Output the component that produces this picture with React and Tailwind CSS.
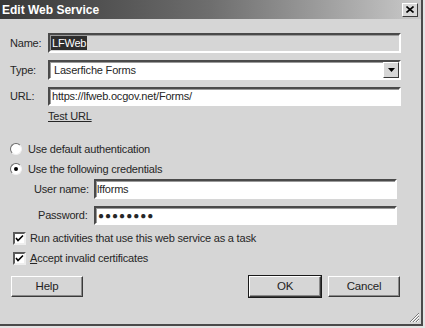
const font = { fontFamily: '"Liberation Sans", Arial, sans-serif' };

function Sunken({ className = '', children }) {
  return (
    <div className={`border-2 border-t-[#4a4a4a] border-l-[#4a4a4a] border-b-white border-r-white shadow-[inset_1px_1px_0_#9a9a9a] ${className}`}>
      {children}
    </div>
  );
}

function Button({ children, isDefault }) {
  return (
    <div className={isDefault ? 'border border-[#1a1a1a]' : 'border border-transparent'}>
      <div className="h-[21px] w-[72px] flex items-center justify-center border border-t-white border-l-white border-b-[#3a3a3a] border-r-[#3a3a3a] shadow-[inset_-1px_-1px_0_#8a8a8a] bg-[#d6d6d6] text-[11.5px] text-[#1e1e1e]">
        {children}
      </div>
    </div>
  );
}

function Radio({ checked, label }) {
  return (
    <div className="flex items-center h-[14px] gap-[6px]">
      <div className="w-[12px] h-[12px] rounded-full bg-white border border-t-[#6a6a6a] border-l-[#6a6a6a] border-b-[#f0f0f0] border-r-[#f0f0f0] flex items-center justify-center">
        {checked && <div className="w-[4px] h-[4px] rounded-full bg-black" />}
      </div>
      <span>{label}</span>
    </div>
  );
}

function Check({ label, accel }) {
  return (
    <div className="flex items-center h-[14px] gap-[4px]">
      <div className="w-[13px] h-[13px] bg-white border-2 border-t-[#5a5a5a] border-l-[#5a5a5a] border-b-[#eeeeee] border-r-[#eeeeee] flex items-center justify-center">
        <svg width="9" height="9" viewBox="0 0 9 9">
          <path d="M1 4 L3 6.5 L8 1.5" stroke="#000" strokeWidth="1.6" fill="none" />
        </svg>
      </div>
      <span>
        {accel ? <><span className="underline">{label[0]}</span>{label.slice(1)}</> : label}
      </span>
    </div>
  );
}

export default function App() {
  return (
    <div className="w-[425px] h-[328px] bg-[#e4e4e4] overflow-hidden" style={font}>
      <div className="w-[423px] h-[326px] bg-[#d6d6d6] border-r-2 border-b-2 border-r-[#4a4a4a] border-b-[#4a4a4a] flex flex-col text-[11px] tracking-[-0.2px] text-[#262626]">
        {/* title bar */}
        <div className="h-[19px] flex items-center justify-between pl-[2px] pr-[3px] bg-gradient-to-r from-[#383838] via-[#6e6e6e] to-[#cacaca]">
          <span className="text-white font-bold text-[12px] tracking-normal">Edit Web Service</span>
          <div className="w-[16px] h-[14px] bg-[#d8d8d8] border border-t-white border-l-white border-b-[#3a3a3a] border-r-[#3a3a3a] flex items-center justify-center">
            <svg width="8" height="7" viewBox="0 0 8 7">
              <path d="M0.5 0.5 L7.5 6.5 M7.5 0.5 L0.5 6.5" stroke="#000" strokeWidth="1.6" />
            </svg>
          </div>
        </div>

        <div className="flex flex-col pl-[10px] pr-[20px]">
          {/* Name */}
          <div className="flex items-center mt-[14px] h-[20px]">
            <span className="w-[38px]">Name:</span>
            <Sunken className="flex-1 h-[20px] bg-[#d6d6d6] flex items-center pl-[1px]">
              <span className="bg-[#2e2e2e] text-white px-[1px] leading-[14px]">LFWeb</span>
            </Sunken>
          </div>

          {/* Type */}
          <div className="flex items-center mt-[7px] h-[20px]">
            <span className="w-[38px]">Type:</span>
            <Sunken className="flex-1 h-[20px] bg-white flex items-center justify-between pl-[4px]">
              <span>Laserfiche Forms</span>
              <div className="w-[16px] h-[16px] bg-[#d6d6d6] border border-t-white border-l-white border-b-[#3a3a3a] border-r-[#3a3a3a] flex items-center justify-center">
                <svg width="7" height="4" viewBox="0 0 7 4">
                  <path d="M0 0 H7 L3.5 4 Z" fill="#000" />
                </svg>
              </div>
            </Sunken>
          </div>

          {/* URL */}
          <div className="flex items-center mt-[7px] h-[19px]">
            <span className="w-[38px]">URL:</span>
            <Sunken className="flex-1 h-[19px] bg-white flex items-center pl-[2px]">
              <span>https://lfweb.ocgov.net/Forms/</span>
            </Sunken>
          </div>

          <div className="pl-[38px] mt-[3px] h-[14px] leading-[14px]">
            <span className="underline">Test URL</span>
          </div>

          <div className="mt-[19px] flex flex-col gap-[6px]">
            <Radio label="Use default authentication" />
            <Radio checked label="Use the following credentials" />
          </div>

          {/* credentials */}
          <div className="flex items-center mt-[3px] h-[20px] pl-[24px]">
            <span className="w-[60px]">User name:</span>
            <Sunken className="w-[303px] h-[20px] bg-white flex items-center pl-[1px]">
              <span>lfforms</span>
            </Sunken>
          </div>
          <div className="flex items-center mt-[7px] h-[19px] pl-[24px]">
            <span className="w-[60px] pl-[4px]">Password:</span>
            <Sunken className="w-[303px] h-[19px] bg-white flex items-center pl-[2px]">
              <span className="text-[10px] tracking-[1px] leading-none">●●●●●●●●</span>
            </Sunken>
          </div>

          <div className="mt-[6px] pl-[3px] flex flex-col gap-[6px]">
            <Check label="Run activities that use this web service as a task" />
            <Check accel label="Accept invalid certificates" />
          </div>

          {/* buttons */}
          <div className="flex items-center justify-between mt-[10px]">
            <Button>Help</Button>
            <div className="flex gap-[5px]">
              <Button isDefault>OK</Button>
              <Button>Cancel</Button>
            </div>
          </div>
        </div>

        {/* size grip */}
        <div className="flex-1 flex items-end justify-end pr-[1px] pb-[1px]">
          <svg width="12" height="12" viewBox="0 0 12 12">
            <path d="M11 2 L2 11 M11 5 L5 11 M11 8 L8 11" stroke="#7a7a7a" strokeWidth="1" />
            <path d="M11 3 L3 11 M11 6 L6 11 M11 9 L9 11" stroke="#ffffff" strokeWidth="1" />
          </svg>
        </div>
      </div>
    </div>
  );
}
